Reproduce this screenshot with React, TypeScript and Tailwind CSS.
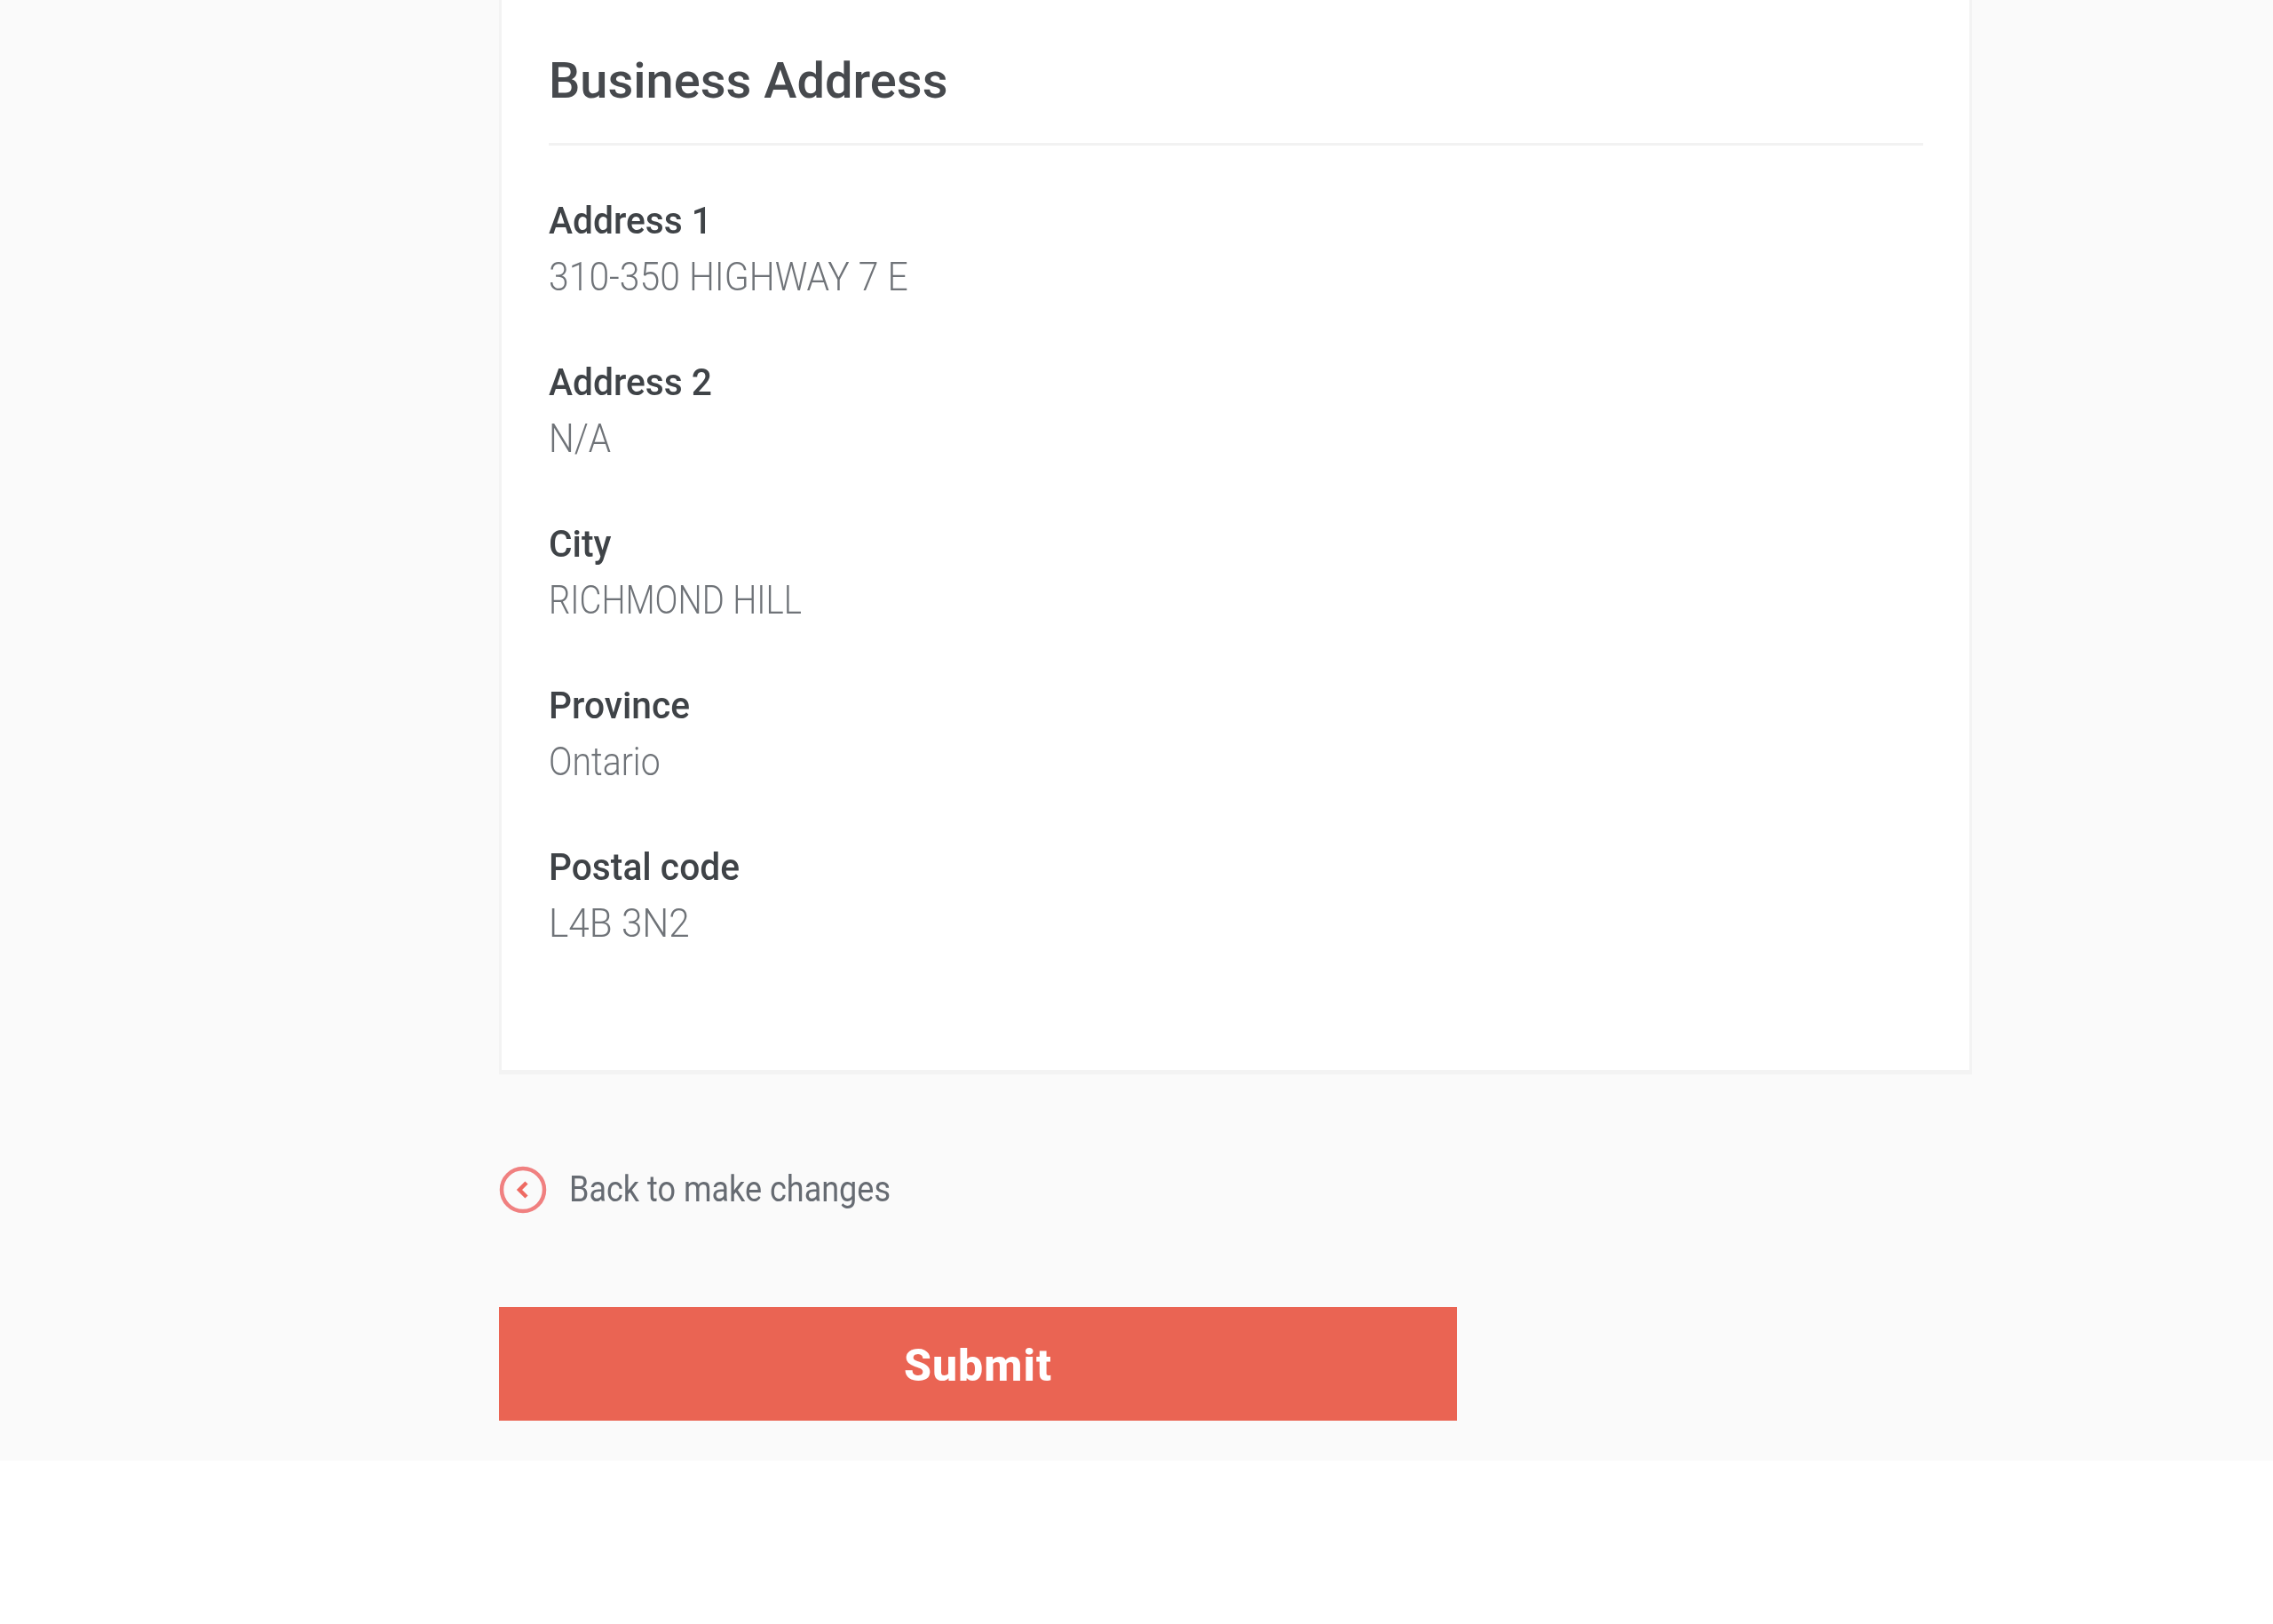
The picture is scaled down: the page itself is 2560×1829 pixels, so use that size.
const fields = [
  { label: "Address 1", value: "310-350 HIGHWAY 7 E", fit: "scale-x-[0.93]" },
  { label: "Address 2", value: "N/A", fit: "scale-x-[0.92]" },
  { label: "City", value: "RICHMOND HILL", fit: "scale-x-[0.87]" },
  { label: "Province", value: "Ontario", fit: "scale-x-[0.89]" },
  { label: "Postal code", value: "L4B 3N2", fit: "scale-x-[0.96]" },
];

export default function App() {
  return (
    <div className="min-h-[1829px] bg-white font-['Roboto',sans-serif]">
      <div className="bg-[#fafafa] pl-[562px] pb-[45px] w-full">
        <section className="w-[1659px] bg-white border-x-[3px] border-b-[5px] border-[#f3f3f3] px-[53px] pb-[133px]">
          <div className="border-b-[3px] border-[#f2f2f2] h-[164px] w-[1548px] pt-[57px]">
            <h2 className="text-[56px] leading-[68px] text-[#46494d] font-medium whitespace-nowrap blur-[0.6px]">
              Business Address
            </h2>
          </div>
          <div className="flex flex-col gap-[54px] pt-[52px]">
            {fields.map((f) => (
              <div key={f.label} className="flex flex-col h-[128px] blur-[0.6px]">
                <div className="text-[42px] leading-[66px] font-medium text-[#3f4347] whitespace-nowrap origin-left scale-x-[0.97]">
                  {f.label}
                </div>
                <div className={`text-[44px] leading-[60px] font-light text-[#6f7378] whitespace-nowrap origin-left ${f.fit}`}>
                  {f.value}
                </div>
              </div>
            ))}
          </div>
        </section>
        <a className="flex items-center gap-[25px] mt-[102px] h-[56px]">
          <svg width="54" height="54" viewBox="0 0 54 54" fill="none" className="blur-[0.5px]">
            <circle cx="27" cy="27" r="24" stroke="#f08080" strokeWidth="4.5" />
            <path d="M31 19l-8 8 8 8" stroke="#ee6a62" strokeWidth="4.5" />
          </svg>
          <span className="text-[40px] leading-[56px] text-[#666b72] whitespace-nowrap blur-[0.6px] origin-left scale-x-[0.9]">
            Back to make changes
          </span>
        </a>
        <button className="block mt-[104px] w-[1079px] h-[128px] pt-[5px] bg-[#ea6453] text-white text-[50px] font-extrabold text-center tracking-[1px]">
          <span className="blur-[0.5px] block">Submit</span>
        </button>
      </div>
    </div>
  );
}
